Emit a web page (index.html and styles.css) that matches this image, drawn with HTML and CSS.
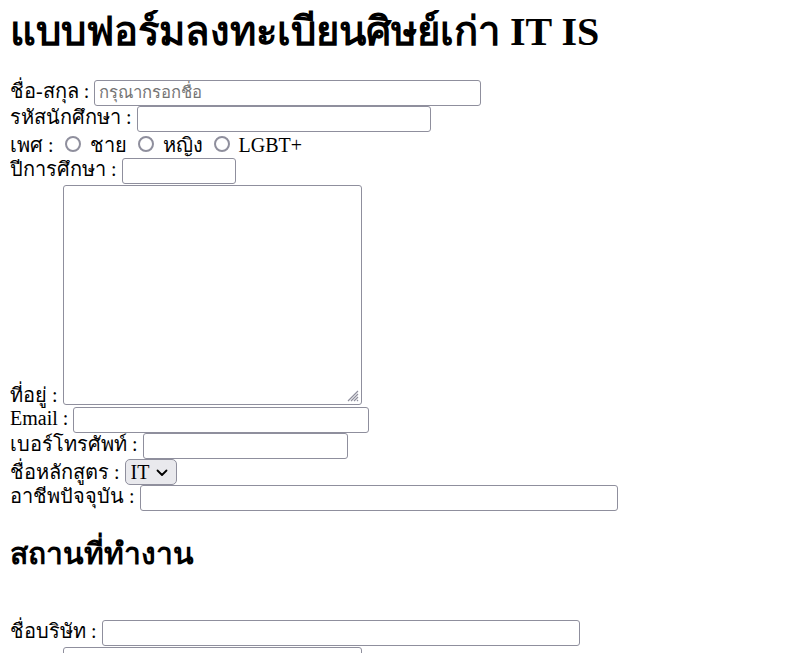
FILE: index.html
```html
<!DOCTYPE html>
<html lang="th">
<head>
<meta charset="utf-8">
<title>แบบฟอร์มลงทะเบียนศิษย์เก่า IT IS</title>
<link rel="stylesheet" href="styles.css">
</head>
<body class="page">
<h1 class="title">แบบฟอร์มลงทะเบียนศิษย์เก่า IT IS</h1>
<form class="form">
ชื่อ-สกุล : <input type="text" class="field f-name" placeholder="กรุณากรอกชื่อ"><br>
รหัสนักศึกษา : <input type="text" class="field f-sid"><br>
เพศ : <input type="radio" name="sex" class="radio"> ชาย <input type="radio" name="sex" class="radio"> หญิง <input type="radio" name="sex" class="radio"> LGBT+<br>
ปีการศึกษา : <input type="text" class="field f-year"><br>
ที่อยู่ : <span class="area-wrap"><textarea class="area"></textarea><svg class="grip" width="14" height="14" viewBox="0 0 14 14"><path d="M13 3 L3 13 M13 6 L6 13 M13 9 L9 13 M13 12 L12 13" stroke="#8f8f9d" stroke-width="1.2" fill="none"/></svg></span><br>
Email : <input type="email" class="field f-email"><br>
เบอร์โทรศัพท์ : <input type="text" class="field f-phone"><br>
ชื่อหลักสูตร : <span class="pick-wrap"><select class="pick"><option>IT</option><option>IS</option></select><svg class="chev" width="12" height="8" viewBox="0 0 12 8"><path d="M1.5 1.5 L6 6 L10.5 1.5" stroke="#000" stroke-width="1.8" fill="none" stroke-linecap="round" stroke-linejoin="round"/></svg></span><br>
อาชีพปัจจุบัน : <input type="text" class="field f-job"><br>
<h2 class="sub">สถานที่ทำงาน</h2>
<br>
ชื่อบริษัท : <input type="text" class="field f-company"><br>
ที่อยู่ : <span class="area-wrap"><textarea class="area"></textarea><svg class="grip" width="14" height="14" viewBox="0 0 14 14"><path d="M13 3 L3 13 M13 6 L6 13 M13 9 L9 13 M13 12 L12 13" stroke="#8f8f9d" stroke-width="1.2" fill="none"/></svg></span><br>
</form>
</body>
</html>
```
FILE: styles.css
```css
.page {
  margin: 10px;
  font-family: "Liberation Serif", "Times New Roman", serif;
  font-size: 20px;
  color: #000;
  background: #fff;
}
.form {
  line-height: 23.5px;
}
.title {
  font-size: 40px;
  line-height: 44px;
  font-weight: bold;
  margin: 0 0 26px;
}
.sub {
  font-size: 30px;
  line-height: 34px;
  font-weight: bold;
  margin: 26px 0 25px;
}
.field {
  box-sizing: border-box;
  height: 26px;
  margin: 0;
  padding: 1px 4px;
  border: 1px solid #8f8f9d;
  border-radius: 3px;
  background: #fff;
  font-family: "Liberation Sans", Arial, sans-serif;
  font-size: 16.67px;
  line-height: normal;
  color: #000;
}
.field::placeholder {
  color: #757575;
}
.f-name { width: 387px; }
.f-sid { width: 294px; }
.f-year { width: 114px; }
.f-email { width: 296px; }
.f-phone { width: 205px; }
.f-job { width: 478px; }
.f-company { width: 478px; }
.radio {
  appearance: none;
  box-sizing: border-box;
  width: 16px;
  height: 16px;
  margin: 4px 4px 0 6px;
  border: 2px solid #8f8f9d;
  border-radius: 50%;
  background: #fff;
}
.area-wrap {
  position: relative;
  display: inline-block;
  line-height: normal;
}
.area {
  box-sizing: border-box;
  width: 299px;
  height: 220px;
  margin: 1px 0 2px;
  border: 1px solid #8f8f9d;
  border-radius: 3px;
  resize: none;
  vertical-align: bottom;
}
.grip {
  position: absolute;
  right: 3px;
  bottom: 5px;
}
.pick-wrap {
  position: relative;
  display: inline-block;
  line-height: normal;
}
.pick {
  appearance: none;
  box-sizing: border-box;
  width: 52px;
  height: 26px;
  margin: 0;
  padding: 0 0 0 5px;
  border: 1px solid #8f8f9d;
  border-radius: 5px;
  background: #e9e9ed;
  font-family: "Liberation Serif", serif;
  font-size: 20px;
  color: #000;
}
.chev {
  position: absolute;
  right: 9px;
  top: 10px;
  pointer-events: none;
}
```
